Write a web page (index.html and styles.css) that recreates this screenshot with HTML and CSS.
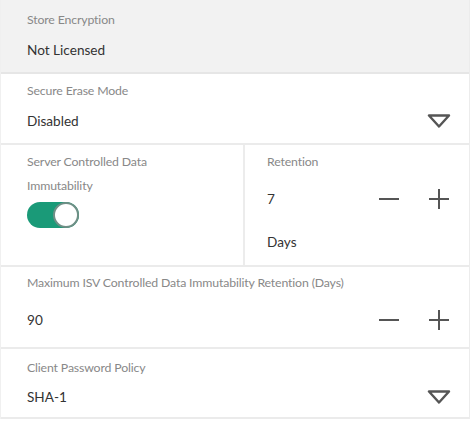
FILE: index.html
```html
<!DOCTYPE html>
<html>
<head>
<meta charset="utf-8">
<link rel="stylesheet" href="styles.css">
</head>
<body>
<div class="panel">
  <div class="row row-readonly">
    <div class="label">Store Encryption</div>
    <div class="value">Not Licensed</div>
  </div>
  <div class="row row-select">
    <div class="label">Secure Erase Mode</div>
    <div class="field">
      <div class="value">Disabled</div>
      <svg class="caret" width="24" height="14" viewBox="0 0 24 14"><path d="M2 1.5 H22 L12 12.5 Z" fill="none" stroke="#555" stroke-width="2.4" stroke-linejoin="round"/></svg>
    </div>
  </div>
  <div class="row row-split">
    <div class="cell cell-left">
      <div class="label">Server Controlled Data</div>
      <div class="label label-second">Immutability</div>
      <div class="toggle"><div class="knob"></div></div>
    </div>
    <div class="cell cell-right">
      <div class="label">Retention</div>
      <div class="field">
        <div class="value">7</div>
        <div class="stepper">
          <svg width="22" height="22" viewBox="0 0 22 22"><path d="M1 11 H21" stroke="#555" stroke-width="2"/></svg>
          <svg width="22" height="22" viewBox="0 0 22 22"><path d="M1 11 H21 M11 1 V21" stroke="#555" stroke-width="2"/></svg>
        </div>
      </div>
      <div class="value value-days">Days</div>
    </div>
  </div>
  <div class="row row-number">
    <div class="label">Maximum ISV Controlled Data Immutability Retention (Days)</div>
    <div class="field">
      <div class="value">90</div>
      <div class="stepper">
        <svg width="22" height="22" viewBox="0 0 22 22"><path d="M1 11 H21" stroke="#555" stroke-width="2"/></svg>
        <svg width="22" height="22" viewBox="0 0 22 22"><path d="M1 11 H21 M11 1 V21" stroke="#555" stroke-width="2"/></svg>
      </div>
    </div>
  </div>
  <div class="row row-select row-last">
    <div class="label">Client Password Policy</div>
    <div class="field">
      <div class="value">SHA-1</div>
      <svg class="caret" width="24" height="14" viewBox="0 0 24 14"><path d="M2 1.5 H22 L12 12.5 Z" fill="none" stroke="#555" stroke-width="2.4" stroke-linejoin="round"/></svg>
    </div>
  </div>
</div>
</body>
</html>
```
FILE: styles.css
```css
html, body {
  margin: 0;
  padding: 0;
  background: #ffffff;
}
body {
  font-family: Lato, "Open Sans", sans-serif;
  color: #333;
}
.panel {
  width: 470px;
  border-right: 1px solid #ececec;
  border-left: 1px solid #f0f0f0;
  box-sizing: border-box;
}
.row {
  border-bottom: 2px solid #ebebeb;
  padding: 9px 18px 12px 26px;
  display: flex;
  flex-direction: column;
}
.row-readonly {
  background: #f2f2f2;
  padding-top: 12px;
  height: 74px;
  box-sizing: border-box;
  border-bottom-color: #e6e6e6;
}
.label {
  font-size: 12.3px;
  line-height: 16px;
  color: #888;
  letter-spacing: -0.15px;
}
.value {
  font-size: 13.6px;
  line-height: 20px;
  color: #333;
  margin-top: 12px;
}
.field {
  display: flex;
  align-items: center;
  justify-content: space-between;
}
.field .value {
  margin-top: 0;
}
.row-select .field {
  margin-top: 12px;
}
.caret {
  display: block;
  margin-right: 0;
}
.row-split {
  flex-direction: row;
  padding: 0;
  height: 122px;
  box-sizing: border-box;
}
.cell {
  display: flex;
  flex-direction: column;
  padding-top: 9px;
}
.cell-left {
  width: 244px;
  padding-left: 26px;
  box-sizing: border-box;
  border-right: 2px solid #ececec;
}
.cell-right {
  flex: 1;
  padding-left: 22px;
  padding-right: 18px;
}
.label-second {
  margin-top: 8px;
}
.toggle {
  margin-top: 8px;
  width: 52px;
  height: 26px;
  border-radius: 13px;
  background: #1a9a78;
  position: relative;
  box-sizing: border-box;
}
.knob {
  position: absolute;
  right: 0;
  top: 0;
  width: 26px;
  height: 26px;
  border-radius: 50%;
  background: #fff;
  border: 2px solid #6f8f86;
  box-sizing: border-box;
}
.cell-right .field {
  margin-top: 18px;
}
.value-days {
  margin-top: 22px;
}
.stepper {
  display: flex;
  gap: 28px;
  margin-right: 1px;
}
.stepper svg {
  display: block;
}
.row-number {
  padding-top: 8px;
  height: 82px;
  box-sizing: border-box;
}
.row-number .field {
  margin-top: 18px;
}
.row-last {
  padding-top: 11px;
  height: 70px;
  box-sizing: border-box;
}
.row-last .field {
  margin-top: 11px;
}
```
